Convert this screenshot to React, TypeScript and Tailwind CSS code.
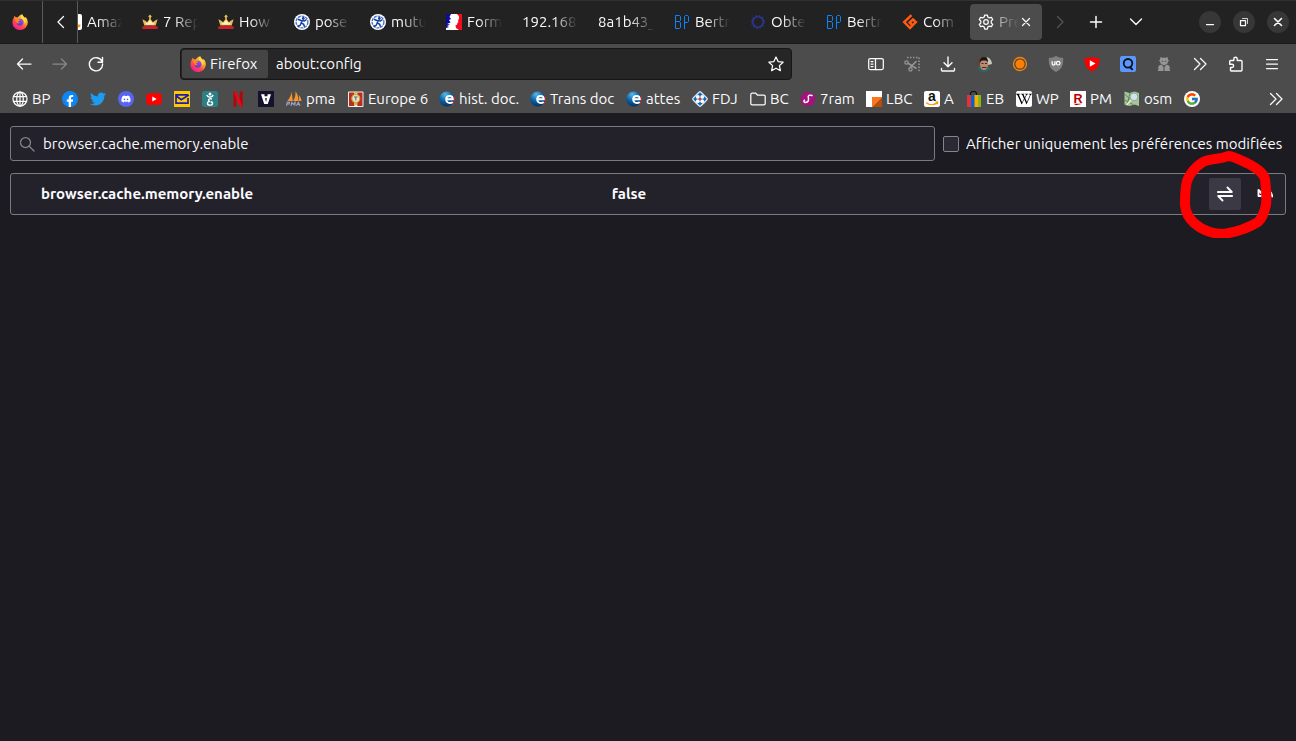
import { useState } from "react";
import type { ReactNode } from "react";
import { FaDiscord, FaFacebookF, FaTwitter, FaWikipediaW } from "react-icons/fa";
import { FcGoogle } from "react-icons/fc";

type IconProps = { children: ReactNode; className?: string };

function Line({ children, className = "size-4" }: IconProps) {
  return (
    <svg viewBox="0 0 16 16" className={className} fill="none" stroke="currentColor" strokeWidth="1.25" strokeLinecap="round" strokeLinejoin="round" aria-hidden="true">
      {children}
    </svg>
  );
}

function Art({ children, className = "size-4" }: IconProps) {
  return (
    <svg viewBox="0 0 16 16" className={className} aria-hidden="true">
      {children}
    </svg>
  );
}

function FirefoxLogo() {
  return (
    <Art>
      <defs>
        <linearGradient id="fx-body" x1="0.85" y1="0.05" x2="0.2" y2="0.95">
          <stop offset="0" stopColor="#fff44f" />
          <stop offset="0.35" stopColor="#ffa12e" />
          <stop offset="0.65" stopColor="#ff4a4a" />
          <stop offset="1" stopColor="#f0189a" />
        </linearGradient>
        <linearGradient id="fx-globe" x1="0.8" y1="0" x2="0.3" y2="1">
          <stop offset="0" stopColor="#a64ff0" />
          <stop offset="1" stopColor="#5a35c8" />
        </linearGradient>
      </defs>
      <path d="M10.300.300c.3 1.600 1.400 2.300 2.300 3.200l1.100-.3c1.300 1.300 2.100 3.200 2.100 5.200a7.700 7.500 0 0 1-15.400.3c0-2 .5-3.700 1.400-5 .2-.9.6-1.500 1.100-2 .2.700.5 1.200.9 1.500.8-.1 1.500 0 2.200.3C6.600 2 8.400.6 10.300.3z" fill="url(#fx-body)" />
      <circle cx="8" cy="8.200" r="3.400" fill="url(#fx-globe)" />
      <path d="M2.700 5.100c1.200-.7 2.700-.6 3.600.2.500.2 1.300.2 1.900.4-.2.900-1.400 1.200-2 1.600-.2.800.5 1.500 1.600 1.500-1.100 1.100-3.100.6-3.600-1-.3-1-.8-1.900-1.500-2.700z" fill="#ff8a16" />
      <path d="M10.200.5c.2 2.100 2.900 3.100 3.200 5.900.2 1.300-.2 2.600-.9 3.400.2-2-1-3.900-2.600-5C8.700 3.700 9 1.500 10.200.5z" fill="#ffe03a" />
    </Art>
  );
}

function Crown() {
  return (
    <Art>
      <path d="M.4 5.200 3.300 6.800 5 8.200 7.200 5.600V3.600L6.200 2.400 8 .6l1.800 1.800-1 1.200v2L11 8.200l1.700-1.400 2.900-1.600-1.900 6.300H2.300z" fill="#e9bb4f" />
      <path d="M3.200 8 5.200 9.200 8 5.800l2.800 3.400 2-1.200-.9 2.800H4.100z" fill="#fff0b8" />
      <path d="M.3 12.500c4.500-1.500 10.900-1.500 15.400 0V15H.3z" fill="#c8202c" />
    </Art>
  );
}

function Runner() {
  return (
    <Art>
      <circle cx="8" cy="8" r="8" fill="#fff" />
      <circle cx="8" cy="8" r="5.900" fill="none" stroke="#4d74d0" strokeWidth="1.400" strokeDasharray="3 0.800" />
      <circle cx="9.300" cy="4.500" r="1.400" fill="#143f9e" />
      <path d="M4 5.200 7 6.500l3.500.500 2-1.500M8.200 6.500 7.200 9l2.500 1.200.8 2.600M7.200 9l-1.200 2.500-2.200.8" fill="none" stroke="#143f9e" strokeWidth="1.500" />
    </Art>
  );
}

function Marianne() {
  return (
    <Art>
      <path d="M0 0h8v16H0z" fill="#0c0c96" />
      <path d="M8 0h8v16H8z" fill="#f20d1e" />
      <path d="M5 0h5.500c2 1 3 2.500 2.500 4.500l-1 2 .5 1.500-1 .7-.5 2-1.500.5.5 2.800 3 2H0v-2l3-1-2-1 3-1.500-3-.5 3.500-1.500L3 6l2-1-1.500-2z" fill="#fff" />
    </Art>
  );
}

function BPMark() {
  return (
    <svg viewBox="0 0 16 16" className="size-4" fill="none" stroke="#0a84ff" strokeWidth="1" aria-hidden="true">
      <path d="M1.500 1.500h4l1 1v4l-1 1h-4m4 0 1 1.500v4.500l-1 1h-4v-13M10.500 15V2.500l1-1h2l1 1v5l-1 1h-3" />
    </svg>
  );
}

function RingMark() {
  return (
    <Art>
      <circle cx="8" cy="8" r="5.300" fill="none" stroke="#2c3488" strokeWidth="1.800" />
      <circle cx="8" cy="8" r="6.400" fill="none" stroke="#2c3488" strokeWidth="1.200" strokeDasharray="1.500 1.850" />
    </Art>
  );
}

function OrangeMark() {
  return (
    <Art>
      <path d="M9.500 1.200 2.200 8 8 14 13.800 8 11 5.500 7.700 8.500 9.800 10.500" fill="none" stroke="#ff5a14" strokeWidth="2.500" />
    </Art>
  );
}

function AmazonMark() {
  return (
    <span className="grid size-4 shrink-0 place-items-center rounded-xs bg-white text-black">
      <svg viewBox="0 0 16 16" className="size-4" aria-hidden="true">
        <text x="7.800" y="9.800" textAnchor="middle" fontFamily="Liberation Sans" fontWeight="700" fontSize="14" fill="#111">a</text>
        <path d="M2 11.500c3.500 2.800 8 2.800 11 .4M11.500 11.200h2.200l-.5 2" fill="none" stroke="#f90" strokeWidth="1.400" />
      </svg>
    </span>
  );
}

const eMark = (
  <Art>
    <defs>
      <radialGradient id="e-ball" cx="0.400" cy="0.200" r="0.850">
        <stop offset="0" stopColor="#55bbe6" />
        <stop offset="0.500" stopColor="#0c62a4" />
        <stop offset="1" stopColor="#032b57" />
      </radialGradient>
    </defs>
    <circle cx="7.700" cy="8" r="7.600" fill="url(#e-ball)" />
    <path d="M15.300 5.500a8 8 0 0 1-1.800 8" fill="none" stroke="#d22" strokeWidth="1" />
    <path d="M7 8.300h6.800c0-2-1.200-3.400-3.200-3.400S7.200 6.300 7.200 8.300s1.400 3.800 3.600 3.800c1.200 0 2.100-.4 2.900-1.100" fill="none" stroke="#fff" strokeWidth="2" />
  </Art>
);

const globe = (
  <Line>
    <circle cx="8" cy="8" r="7" />
    <ellipse cx="8" cy="8" rx="3.300" ry="7" />
    <path d="M1.500 5.700h13M1.500 10.300h13M8 1v14" />
  </Line>
);

const moreChevrons = (
  <Line>
    <path d="m2.500 2.500 5.500 5.500-5.500 5.500M8.500 2.500 14 8l-5.500 5.500" />
  </Line>
);

type Tab = { label: string; icon?: ReactNode };

const tabs: Tab[] = [
  { label: "Amaz", icon: <AmazonMark /> },
  { label: "7 Rep", icon: <Crown /> },
  { label: "How", icon: <Crown /> },
  { label: "pose", icon: <Runner /> },
  { label: "mutu", icon: <Runner /> },
  { label: "Form", icon: <Marianne /> },
  { label: "192.168" },
  { label: "8a1b43_" },
  { label: "Bertr", icon: <BPMark /> },
  { label: "Obte", icon: <RingMark /> },
  { label: "Bertr", icon: <BPMark /> },
  { label: "Com", icon: <OrangeMark /> },
];

function TabStrip() {
  return (
    <header className="flex h-11 items-stretch border-t border-b border-t-[#303030] border-b-[#1a1a1a] bg-[#222222]">
      <button aria-label="Firefox View" className="flex w-[43px] items-center justify-center border-r border-[#5a5a5a] pr-0.5">
        <FirefoxLogo />
      </button>
      <button aria-label="Scroll tabs left" className="flex w-[35px] items-center justify-center border-r border-[#5a5a5a] pl-0.5">
        <Line><path d="M10.500 2.500 5 8l5.500 5.500" /></Line>
      </button>
      <nav aria-label="Tabs" className="flex min-w-0 flex-1 items-center justify-end overflow-hidden">
        {tabs.map((tab, i) => (
          <button key={i} className="mx-0.5 flex h-9 w-[72px] shrink-0 items-center gap-[5px] px-2">
            {tab.icon && <span className="size-4 shrink-0">{tab.icon}</span>}
            <span className="min-w-0 flex-1 text-left whitespace-nowrap [mask-image:linear-gradient(to_left,transparent,black_24px)]">{tab.label}</span>
          </button>
        ))}
        <div className="mx-0.5 flex h-9 w-[72px] shrink-0 items-center rounded bg-[#4c4c4c] pl-2">
          <button className="flex min-w-0 flex-1 items-center gap-[5px]">
            <Line className="size-4 shrink-0">
              <circle cx="8" cy="8" r="2.300" />
              <path d="m6.700 1-.5 2-1.600.9-2-.6-1.300 2.300L2.800 7v2l-1.500 1.400 1.300 2.300 2-.6 1.600.9.500 2h2.600l.5-2 1.600-.9 2 .6 1.300-2.300L13.200 9V7l1.500-1.400-1.300-2.300-2 .6L9.800 3l-.5-2z" />
            </Line>
            <span className="w-5 text-left whitespace-nowrap text-[#b4b4b4] [mask-image:linear-gradient(to_left,transparent,black_18px)]">Pré</span>
          </button>
          <button aria-label="Close tab" className="mr-2">
            <Line className="size-4"><path d="m4.500 4.500 7 7m0-7-7 7" /></Line>
          </button>
        </div>
      </nav>
      <button aria-label="Scroll tabs right" className="flex w-8 items-center justify-center text-[#555555]">
        <Line><path d="M5.500 2.500 11 8l-5.500 5.500" /></Line>
      </button>
      <button aria-label="New tab" className="flex w-10 items-center justify-center">
        <Line><path d="M8 2.500v11M2.500 8h11" strokeWidth="1.500" /></Line>
      </button>
      <button aria-label="List all tabs" className="flex w-10 items-center justify-center">
        <Line><path d="m2.500 5 5.500 5.500L13.500 5" strokeWidth="1.400" /></Line>
      </button>
      <div className="ml-auto flex items-center gap-3 pr-[7px] pl-[43px]">
        <button aria-label="Minimize" className="grid size-[22px] place-items-center rounded-full bg-[#373737]">
          <Line><path d="M4.500 10.500h7" /></Line>
        </button>
        <button aria-label="Restore" className="grid size-[22px] place-items-center rounded-full bg-[#373737]">
          <Line><path d="M4.500 6.500h5v5h-5z" /><path d="M6.500 4.500h5v5" strokeWidth="0.800" /></Line>
        </button>
        <button aria-label="Close" className="grid size-[22px] place-items-center rounded-full bg-[#373737]">
          <Line><path d="m4.500 4.500 7 7m0-7-7 7" strokeWidth="1.600" /></Line>
        </button>
      </div>
    </header>
  );
}

const actions: { name: string; icon: ReactNode }[] = [
  {
    name: "Sidebar",
    icon: <Line><rect x="0.700" y="2.500" width="14.600" height="11" rx="1.500" /><path d="M7.500 2.500v11M3 5.500h2M3 8h2M3 10.500h2" /></Line>,
  },
  {
    name: "Screenshot",
    icon: (
      <Line className="size-4 text-[#959595]">
        <path d="M3 1.500h12v13h-2" strokeWidth="1.600" strokeDasharray="1.500 1.500" strokeLinecap="butt" />
        <circle cx="2.500" cy="6.500" r="1.700" /><circle cx="6.500" cy="13.300" r="1.700" />
        <path d="m4 7.300 8 5M6 11.800 12 5.500" strokeWidth="1.600" />
      </Line>
    ),
  },
  { name: "Downloads", icon: <Line><path d="M8 1v9.500M4 6.800l4 4 4-4M1.500 12.500v1.300a1.200 1.200 0 0 0 1.200 1.200h10.600a1.200 1.200 0 0 0 1.200-1.200v-1.300" strokeWidth="1.400" /></Line> },
  {
    name: "Profile",
    icon: (
      <Art>
        <circle cx="8" cy="8" r="8" fill="#54483f" />
        <path d="M1 12a8 8 0 0 0 14 0l-3-1.500H4z" fill="#2d6468" />
        <path d="M11 1c3 1 5 4 5 7l-4 1z" fill="#c4c8c3" />
        <ellipse cx="8" cy="8.500" rx="4" ry="5.500" fill="#bd8872" />
        <path d="M3.500 6.500C4 2 6 .8 8.500 1.200s3.700 2.500 3.500 4.800l-2-1.500H6z" fill="#191513" />
        <path d="M5.500 7.500h2M9 7.500h2M6 11.500h4.500" stroke="#47271f" strokeWidth="1" />
      </Art>
    ),
  },
  { name: "Recorder", icon: <Art><circle cx="8" cy="8" r="6.500" fill="none" stroke="#ff8000" strokeWidth="1.300" /><circle cx="8" cy="8" r="4.500" fill="#ff8000" /></Art> },
  {
    name: "Content blocker",
    icon: (
      <Art>
        <path d="M8 0c2.200 1.300 4.500 2 7.200 2 0 7-.7 10.500-7.200 14C1.500 12.500.8 9 .8 2 3.500 2 5.800 1.300 8 0z" fill="#808080" />
        <path d="M4.200 5.200v2.600c0 1.700 2.700 1.700 2.700 0V5.200M7 5.200v3.800" fill="none" stroke="#fff" strokeWidth="1.200" />
        <circle cx="10.200" cy="7.200" r="1.800" fill="none" stroke="#fff" strokeWidth="1.200" />
      </Art>
    ),
  },
  { name: "Video enhancer", icon: <Art><path d="M8 .8c2 1 4.500 1.300 7.500 1.400 0 6-1 10-7.500 13.300C1.500 12.200.5 8.200.5 2.200 3.500 2.100 6 1.800 8 .8z" fill="#f80000" /><path d="m5.800 4.200 5.700 3.300-5.700 3.300z" fill="#fff" /></Art> },
  { name: "Qwant", icon: <Art><rect width="16" height="16" rx="2" fill="#5b97ff" /><circle cx="8" cy="7.300" r="4.300" fill="none" stroke="#101014" strokeWidth="1.800" /><path d="m9.500 10.500 3.200 3.300" stroke="#101014" strokeWidth="1.900" /></Art> },
  {
    name: "Privacy agent",
    icon: <Art><path d="M4.500 1 7 2l1-.5 1 .5 2.500-1 .5 3 1.500.5-1.500 1-.5 2L8 9.500 4.500 7.500 4 5.500l-1.500-1L4 4z" fill="#969696" /><path d="M5.800 5.200h1.500M8.800 5.200h1.500" stroke="#4c4c4c" strokeWidth="1.100" /><path d="M3 9.500 5.500 8.500 7.500 11v4h-6L3 12.500H1.700zM13 9.500l-2.500-1L8.500 11v4h6L13 12.500h1.300z" fill="#969696" /></Art>,
  },
  { name: "More tools", icon: moreChevrons },
  { name: "Extensions", icon: <Line><path d="M5.800 4.500V3a1.700 1.700 0 0 1 3.400 0v1.500H13a1 1 0 0 1 1 1V14a1 1 0 0 1-1 1H3.500a1 1 0 0 1-1-1v-2.500H4a1.600 1.600 0 0 0 0-3.300H1.700V5.500a1 1 0 0 1 1-1z" strokeWidth="1.400" /></Line> },
  { name: "Menu", icon: <Line><path d="M2.500 3.500h11M2.500 8h11M2.500 12.500h11" /></Line> },
];

function NavBar() {
  return (
    <div className="flex h-10 items-center px-1.5">
      <button aria-label="Back" className="flex h-8 w-9 items-center justify-center"><Line><path d="M15 8H1.500M6.500 3l-5 5 5 5" /></Line></button>
      <button aria-label="Forward" disabled className="flex h-8 w-9 items-center justify-center text-[#888888]"><Line><path d="M1 8h13.500M9.500 3l5 5-5 5" /></Line></button>
      <button aria-label="Reload" className="flex h-8 w-9 items-center justify-center"><Line><path d="M14 5.500A6.600 6.600 0 1 0 14.600 8M14.500 1.500v4.700H10" strokeWidth="1.400" /></Line></button>
      <div className="mx-[66px] flex h-8 min-w-0 flex-1 items-center rounded border border-[#171717] bg-[#262626] p-px">
        <button className="flex h-7 w-[86px] shrink-0 items-center gap-1 rounded-xs bg-[#454545] px-2">
          <span className="size-4 shrink-0"><FirefoxLogo /></span>
          <span>Firefox</span>
        </button>
        <input aria-label="Address" defaultValue="about:config" className="min-w-0 flex-1 bg-transparent px-2 outline-none" />
        <button aria-label="Bookmark this page" className="px-1.5">
          <Line><path d="m8 1 2.100 4.600 5 .6-3.700 3.400 1 5L8 12.200l-4.400 2.400 1-5L.9 6.200l5-.6z" /></Line>
        </button>
      </div>
      {actions.map((a) => (
        <button key={a.name} aria-label={a.name} className="flex h-8 w-9 shrink-0 items-center justify-center">{a.icon}</button>
      ))}
    </div>
  );
}

const bookmarks: { name: string; text?: string; width: string; icon: ReactNode }[] = [
  { name: "BP", text: "BP", width: "w-[38px]", icon: globe },
  {
    name: "Facebook",
    width: "w-4",
    icon: <span className="flex size-4 items-end justify-center rounded-full bg-[#0d86f5] text-white"><FaFacebookF className="size-3" /></span>,
  },
  { name: "Twitter", width: "w-4", icon: <FaTwitter className="size-4 text-[#1d9bf0]" /> },
  {
    name: "Discord",
    width: "w-4",
    icon: <span className="grid size-4 place-items-center rounded-full bg-[#5865f2] text-white"><FaDiscord className="size-2.5" /></span>,
  },
  { name: "YouTube", width: "w-4", icon: <Art><rect x="0.300" y="2.300" width="15.400" height="11.400" rx="2.800" fill="#f00" /><path d="m6.300 5.600 4.400 2.400-4.400 2.400z" fill="#fff" /></Art> },
  { name: "Mail", width: "w-4", icon: <Art><path d="M0 0h16v16H0z" fill="#ffc800" /><path d="M14 3.800H2v8.400h12V7M2.300 5l5 3.800L14.800 4" fill="none" stroke="#1c20a8" strokeWidth="1.700" /></Art> },
  { name: "Health", width: "w-4", icon: <Art><rect width="16" height="16" rx="2.500" fill="#2b7f85" /><circle cx="8" cy="3" r="1.500" fill="#fff" /><path d="M4.800 4C5.500 6 6.500 6.300 8 6.300s2.500-.3 3.200-2.300M10 8.200c-1.500-.8-3.500-.3-3.500 1 0 .8.800 1.200 1.500 1.200-1.500 0-2.500.8-2.500 1.800 0 2.500 5 2.500 5 0 0-1-.8-1.500-2-1.500" fill="none" stroke="#fff" strokeWidth="1.400" /></Art> },
  { name: "Netflix", width: "w-4", icon: <Art><path d="M3.500.500h3v15l-3 .4z" fill="#b1060f" /><path d="M9.700.500h3v15.400l-3-.4z" fill="#b1060f" /><path d="M3.500.500h3l6.200 15.400-3-.4z" fill="#e50914" /></Art> },
  { name: "Archive", width: "w-4", icon: <Art><path d="M0 0h16v16H0z" fill="#15132b" /><path d="M3 3.300h3.500v2h3v-2H13L9.800 13H6.200zM7 7.300 8 11l1-3.700z" fill="#fff" fillRule="evenodd" /></Art> },
  { name: "pma", text: "pma", width: "w-[50px]", icon: <Art><path d="M1.200 10C3.800 7.500 5 4.500 5.600.8L6.800 10zM7 10C9 7.500 9.500 4.500 9.600.2c2 2.800 3 6 2.800 9.800zM12.800 10c.4-1.500.4-3.800 0-6 1.500 1.500 2.500 3.500 2.700 6z" fill="#f6952e" /><path d="M.5 14.800 1.300 11.300h2.200l-.3 1.700H1M5 14.800l.8-3.500 1.500 2 1.800-2-.3 3.500m1.700 0 1.800-3.500 1.800 3.500m-2.700-1.300h2" fill="none" stroke="#9c9cc4" strokeWidth="1.200" /></Art> },
  { name: "Europe 6", text: "Europe 6", width: "w-[79px]", icon: <Art><path d="M.5 1h14.500v14.500H.5z" fill="#b82c24" stroke="#eee" strokeWidth="1" /><path d="M6.300 1h3v14.500h-3z" fill="#eee" /><circle cx="7.800" cy="7.500" r="4" fill="#e6e2d2" stroke="#c9a227" strokeWidth="1.200" /><path d="M6 6h3.600M7.800 6v3.500" stroke="#666" strokeWidth="1" /><circle cx="7.800" cy="1.500" r="1.300" fill="#dcb32c" /><circle cx="7.800" cy="13" r="1.300" fill="#dcb32c" /></Art> },
  { name: "hist. doc.", text: "hist. doc.", width: "w-[79px]", icon: eMark },
  { name: "Trans doc", text: "Trans doc", width: "w-[84px]", icon: eMark },
  { name: "attes", text: "attes", width: "w-[54px]", icon: eMark },
  { name: "FDJ", text: "FDJ", width: "w-[46px]", icon: <Art><path d="M8 0c1 0 8 7 8 8s-7 8-8 8-8-7-8-8 7-8 8-8z" fill="#d8e8f6" /><path d="M8 1.200 14.800 8 8 14.800 1.200 8z" fill="#1b63b3" /><circle cx="5.800" cy="5.900" r="1.900" fill="#fff" /><circle cx="10.200" cy="5.900" r="1.900" fill="#fff" /><circle cx="5.800" cy="10.200" r="1.900" fill="#fff" /><circle cx="10.200" cy="10.200" r="1.900" fill="#fff" /><circle cx="8" cy="8" r="1.300" fill="#e2343a" /></Art> },
  { name: "BC", text: "BC", width: "w-[38px]", icon: <Line><path d="M.8 12.500v-9a1.300 1.300 0 0 1 1.300-1.300h3.600l2 2h6.200a1.300 1.300 0 0 1 1.300 1.300v7a1.300 1.300 0 0 1-1.300 1.300H2.100a1.300 1.300 0 0 1-1.300-1.300z" /></Line> },
  { name: "7ram", text: "7ram", width: "w-[54px]", icon: <Art><circle cx="8" cy="8" r="7.300" fill="#a4127e" /><path d="M12 4.500c-2.500-.8-4.300 0-3.700 2 .8 2.500 0 5-2.800 5-1.600 0-2-1.500-1-2.300" fill="none" stroke="#fff" strokeWidth="1.500" strokeLinecap="round" /></Art> },
  { name: "LBC", text: "LBC", width: "w-[46px]", icon: <Art><path d="M0 0h16v16H0z" fill="#fff" /><path d="M6 6h10L6 16z" fill="#ff7417" /><path d="M16 6v10H6z" fill="#b84d09" /></Art> },
  { name: "Amazon", text: "A", width: "w-[30px]", icon: <AmazonMark /> },
  { name: "eBay", text: "EB", width: "w-[38px]", icon: <Art><path d="M4.500 4V2.500C4.500-.3 10.500-.3 10.500 2.500V4" fill="none" stroke="#111" strokeWidth="1.200" /><path d="M1 4h4v12H1z" fill="#e53238" /><path d="M5 4h3.500v12H5z" fill="#0064d2" /><path d="M8.500 4H12v12H8.500z" fill="#f5af02" /><path d="M12 4h3v12h-3z" fill="#86b817" /></Art> },
  { name: "Wikipedia", text: "WP", width: "w-[42px]", icon: <span className="grid size-4 place-items-center rounded-xs bg-white text-black"><FaWikipediaW className="size-4" /></span> },
  { name: "Rakuten", text: "PM", width: "w-[42px]", icon: <Art><path d="M0 0h16v16H0z" fill="#fff" /><text x="8" y="11.500" textAnchor="middle" fontFamily="Liberation Sans" fontWeight="700" fontSize="12.500" fill="#b80000">R</text><path d="M3.500 12.800h9L6 14.300z" fill="#b80000" /></Art> },
  { name: "OpenStreetMap", text: "osm", width: "w-12", icon: <Art><path d="M.5.500 5.500 2l5-1.500 4.500 1.500v13l-4.500-1.500-5 1.500-5-1.500z" fill="#a4c893" /><path d="m.5 3 5 4.500L2 14.500M6 2 3 14M.5 9 9 13.500" fill="none" stroke="#647f58" strokeWidth="0.900" /><path d="M7.500 8.500 2.500 14" stroke="#e5e8dd" strokeWidth="1.800" /><circle cx="10" cy="5.800" r="3.900" fill="#cfe4ea" stroke="#8fa3a0" strokeWidth="1" /></Art> },
  { name: "Google", width: "w-4", icon: <span className="grid size-4 place-items-center rounded-full bg-white"><FcGoogle className="size-[14px]" /></span> },
];

function BookmarksBar() {
  return (
    <nav aria-label="Bookmarks" className="flex h-[29px] items-center pr-3 pl-3">
      <ul className="flex min-w-0 flex-1 items-center gap-3">
        {bookmarks.map((b) => (
          <li key={b.name} className={"shrink-0 " + b.width}>
            <a href="#" aria-label={b.name} className="flex items-center gap-1 whitespace-nowrap">
              <span className="size-4 shrink-0">{b.icon}</span>
              {b.text && <span className="leading-4">{b.text}</span>}
            </a>
          </li>
        ))}
      </ul>
      <button aria-label="More bookmarks">{moreChevrons}</button>
    </nav>
  );
}

export default function App() {
  const [enabled, setEnabled] = useState(false);
  return (
    <div className="min-h-screen bg-[#1c1b22] font-['Ubuntu','Noto_Sans',sans-serif] text-[15px] leading-5 text-[#fbfbfe]">
      <TabStrip />
      <div className="bg-[#4c4c4c]">
        <NavBar />
        <BookmarksBar />
      </div>
      <main className="px-2.5 pt-[13px]">
        <div className="flex items-center gap-2">
          <label className="flex h-[35px] min-w-0 flex-1 items-center gap-2 rounded-[3px] border border-[#7b7a82] bg-[#23222b] px-2">
            <Line className="size-4 shrink-0 text-[#85848c]"><circle cx="6.500" cy="6.500" r="5" /><path d="m10.300 10.300 4.700 4.700" /></Line>
            <input aria-label="Search preference name" defaultValue="browser.cache.memory.enable" className="min-w-0 flex-1 bg-transparent outline-none" />
          </label>
          <label className="flex shrink-0 items-center gap-[7px] whitespace-nowrap">
            <input type="checkbox" className="size-4 appearance-none rounded-xs border border-[#85848c] bg-[#2b2a33]" />
            <span className="min-w-80">Afficher uniquement les préférences modifiées</span>
          </label>
        </div>
        <div className="relative mt-3 rounded-[3px] border border-[#7b7a82] bg-[#23222b]">
          <table className="w-full table-fixed font-bold">
            <tbody>
              <tr className="h-10">
                <th scope="row" className="w-[47%] py-0 pl-[30px] text-left">browser.cache.memory.enable</th>
                <td className="py-0 pl-0.5">{String(enabled)}</td>
                <td className="w-[90px] py-0">
                  <div className="flex items-center gap-2 pl-3.5">
                    <button aria-label="Toggle" onClick={() => setEnabled(!enabled)} className="grid size-8 place-items-center rounded-xs bg-[#3a3944]">
                      <Line><path d="M.8 6h14L10.500 1.500M15.200 10h-14l4.300 4.500" strokeWidth="1.900" /></Line>
                    </button>
                    <button aria-label="Reset" className="grid size-8 place-items-center">
                      <Line><path d="M1.500 4v6h6zM4 7C6.500 3 14.500 3 15.200 10.500" strokeWidth="1.900" /></Line>
                    </button>
                  </div>
                </td>
              </tr>
            </tbody>
          </table>
          <svg viewBox="0 0 96 88" className="pointer-events-none absolute -top-6 right-2.5 h-[88px] w-24" fill="none" stroke="#ff0000" strokeWidth="10" strokeLinejoin="round" aria-hidden="true">
            <path d="M49 6c6 0 14 5 21 8 7 4 14 8 16 15 1 8 2 17 1 26-2 7-3 13-8 17-8 5-22 10-34 12-12 0-22-4-30-11-5-5-8-9-9-18 0-8 0-17 2-24 3-8 8-14 16-19 7-4 16-2 25-6z" />
          </svg>
        </div>
      </main>
    </div>
  );
}
